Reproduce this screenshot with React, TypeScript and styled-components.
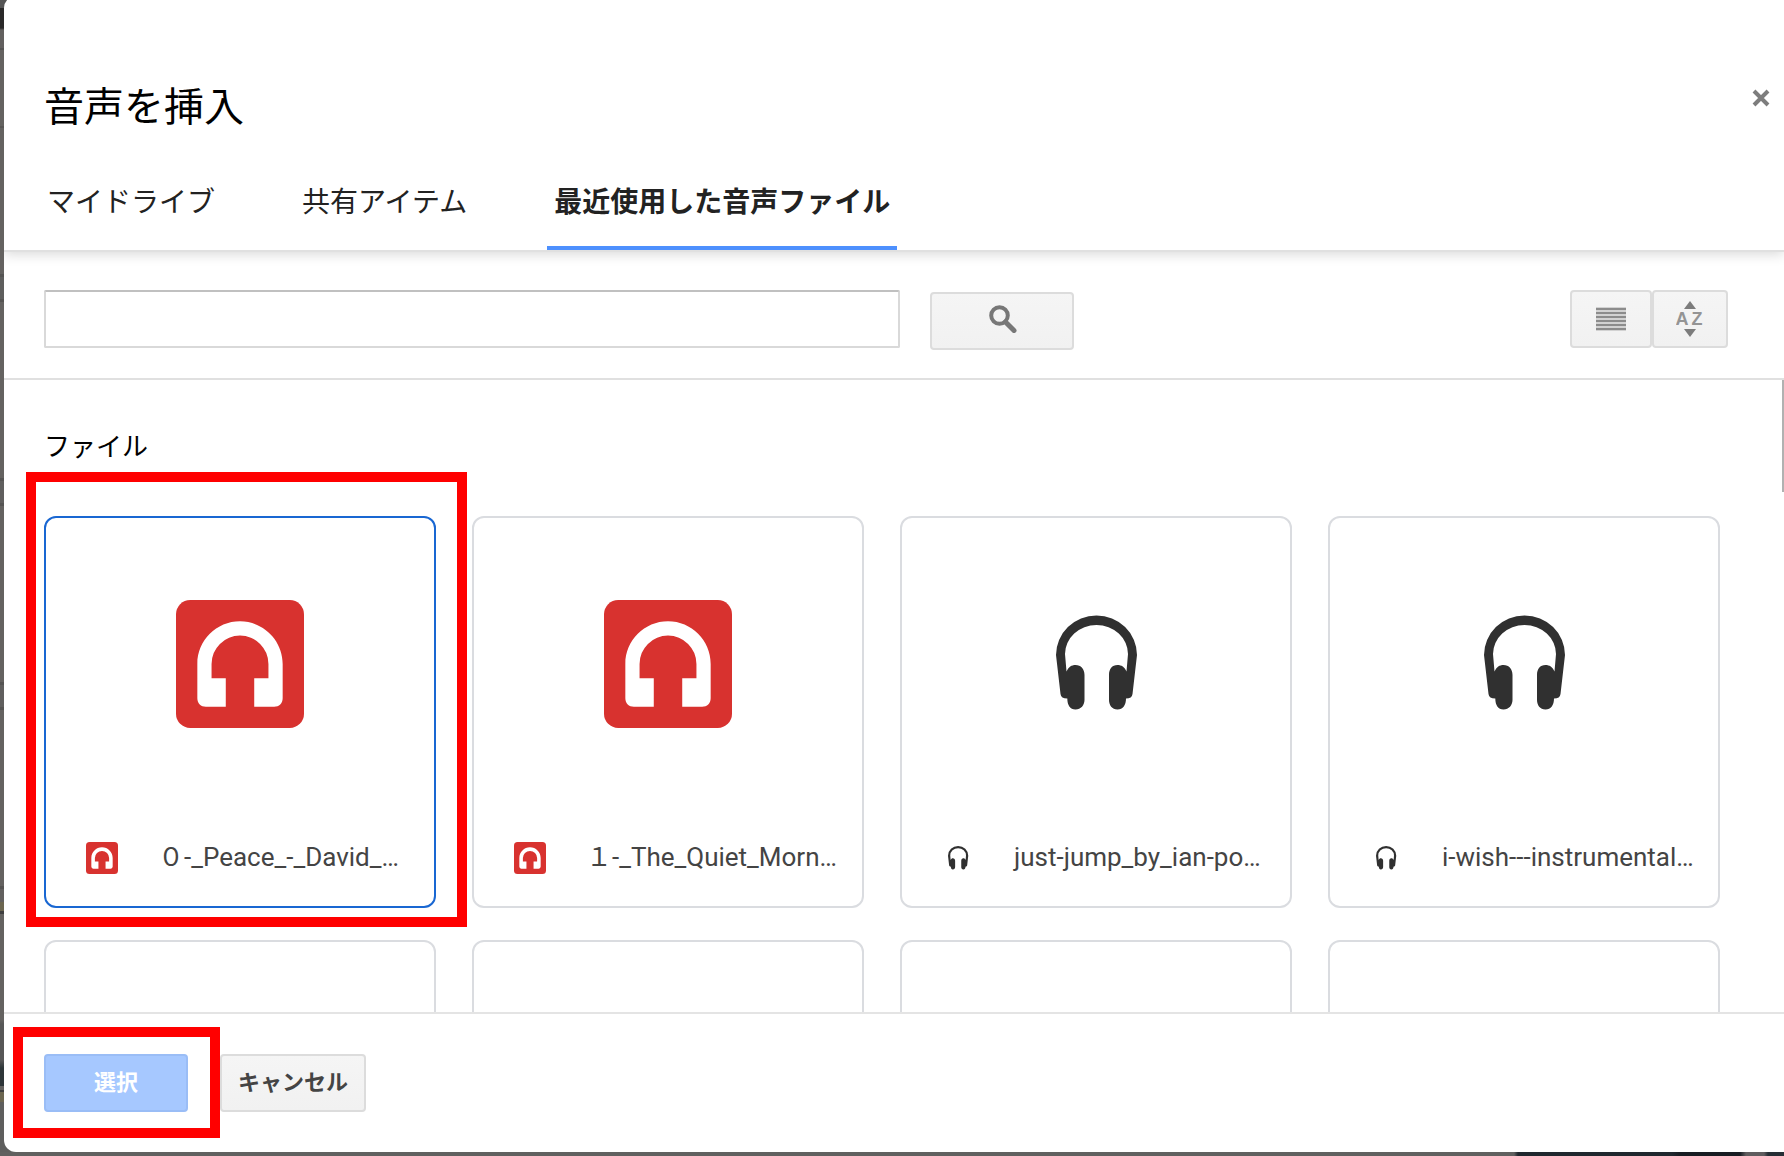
import React, { useState } from "react";
import styled, { createGlobalStyle, css } from "styled-components";

const GlobalStyle = createGlobalStyle`
  *, *::before, *::after { box-sizing: border-box; }
  html, body { margin: 0; height: 100%; overflow: hidden; }
  body {
    font-family: Roboto, "Noto Sans CJK JP", sans-serif;
    color: #000;
    background: #646260;
  }
  button, input { font-family: inherit; margin: 0; }
`;

/* The dimmed editor page that shows along the dialog's left and bottom edges. */
const Backdrop = styled.div`
  height: 100vh;
  display: flex;
  padding: 0 0 4px 4px;
  background:
    linear-gradient(90deg, transparent 0 1514px, #20272e 1518px 1672px, #171c22 1680px 1740px, #5f5c5e 1746px 1764px, #262e35 1768px) bottom / 100% 4px no-repeat,
    linear-gradient(#60605f, #60605f) bottom / 100% 4px no-repeat,
    linear-gradient(
      #555 0 8px, #2a2929 8px 28px, #62605f 30px 48px, #555453 48px 50px,
      #646260 50px 126px, #585655 126px 128px, #646260 128px 274px,
      #555453 274px 277px, #5e5e5d 277px 299px, #555453 299px 302px,
      #646260 302px 478px, #555453 478px 481px, #605f5e 481px 503px,
      #555453 503px 506px, #646260 506px 682px, #555453 682px 685px,
      #605f5e 685px 707px, #555453 707px 710px, #646260 710px 886px,
      #555453 886px 889px, #62605f 889px 902px, #6c6650 902px 911px,
      #3f3f3f 911px 914px, #646260 914px 1020px, #575757 1024px 1060px,
      #2e3639 1068px 1086px, #646260 1086px 1090px, #3f3f3f 1090px 1092px,
      #6c6650 1092px 1102px, #5e5e5d 1102px
    );
`;

const Dialog = styled.section`
  flex: 1;
  min-width: 0;
  display: flex;
  flex-direction: column;
  margin-top: -4px;
  background: #fff;
  border-radius: 12px 0 0 12px;
  overflow: hidden;
`;

const Header = styled.header`
  position: relative;
  z-index: 1;
  display: flex;
  flex-direction: column;
  padding-top: 82px;
  border-bottom: 2px solid #e0e0e0;
  box-shadow: 0 2px 12px rgba(0, 0, 0, 0.16);
`;

const TitleRow = styled.div`
  display: flex;
  justify-content: space-between;
  align-items: flex-start;
  padding: 0 8px 0 40px;
`;

const Title = styled.h1`
  margin: 0;
  font-size: 40px;
  line-height: 60px;
  font-weight: 400;
`;

const CloseButton = styled.button`
  width: 30px;
  height: 40px;
  display: grid;
  place-items: center;
  padding: 0;
  border: 0;
  background: none;
  color: #7d7d7d;
  cursor: pointer;
`;

const Tabs = styled.nav`
  display: flex;
  gap: 73px;
  padding: 13px 36px 0;
`;

const Tab = styled.button<{ $active: boolean }>`
  height: 99px;
  padding: 8px 7px 0;
  border: 0;
  border-bottom: 4px solid ${(p) => (p.$active ? "#4d90fe" : "transparent")};
  background: none;
  color: #222;
  font-size: 28px;
  line-height: 42px;
  font-weight: ${(p) => (p.$active ? 700 : 400)};
  white-space: nowrap;
  cursor: pointer;
`;

const Toolbar = styled.div`
  display: flex;
  justify-content: space-between;
  align-items: flex-start;
  padding: 38px 56px 28px 40px;
  border-bottom: 2px solid #e0e0e0;
`;

const SearchForm = styled.form`
  flex: 0 1 1030px;
  display: flex;
  gap: 30px;
`;

const SearchInput = styled.input`
  flex: 1;
  min-width: 0;
  height: 58px;
  padding: 0 16px;
  border: 2px solid #d9d9d9;
  border-top-color: #c0c0c0;
  border-radius: 2px;
  font-size: 26px;
  outline: none;
`;

const buttonBase = css`
  height: 58px;
  display: flex;
  align-items: center;
  justify-content: center;
  padding: 0;
  border: 2px solid #dcdcdc;
  border-radius: 4px;
  background: linear-gradient(#f5f5f5, #f1f1f1);
  color: #444;
  cursor: pointer;
`;

const SearchButton = styled.button`
  ${buttonBase}
  width: 144px;
  margin-top: 2px;
  padding: 0 0 4px 2px;
`;

const ViewTools = styled.div`
  display: flex;
`;

const ToolButton = styled.button<{ $width: number }>`
  ${buttonBase}
  width: ${(p) => p.$width}px;
`;

const Body = styled.main`
  position: relative;
  flex: 1;
  min-height: 0;
  overflow: hidden;
  padding: 47px 64px 0 40px;
`;

const ScrollThumb = styled.div`
  position: absolute;
  top: 0;
  right: 0;
  width: 2px;
  height: 112px;
  background: #b1b1b1;
`;

const SectionTitle = styled.h2`
  margin: 0 0 49px;
  font-size: 26px;
  line-height: 40px;
  font-weight: 400;
`;

const Grid = styled.ul`
  display: grid;
  grid-template-columns: repeat(4, minmax(0, 1fr));
  gap: 32px 36px;
  margin: 0;
  padding: 0;
  list-style: none;
`;

const GridItem = styled.li`
  position: relative;
`;

const Card = styled.button<{ $selected: boolean }>`
  width: 100%;
  aspect-ratio: 1;
  display: flex;
  flex-direction: column;
  padding: 0;
  border: 2px solid ${(p) => (p.$selected ? "#1967d2" : "#dadce0")};
  border-radius: 12px;
  background: #fff;
  color: #444;
  text-align: left;
  cursor: pointer;
`;

const Preview = styled.span`
  flex: 1;
  width: 100%;
  display: grid;
  place-items: center;
`;

const Caption = styled.span`
  width: 100%;
  height: 96px;
  display: flex;
  align-items: center;
  gap: 40px;
  padding: 0 8px 0 40px;
  svg { flex: none; }
`;

const FileName = styled.span`
  padding-bottom: 2px;
  font-size: 26px;
  line-height: 40px;
  white-space: nowrap;
`;

const Marker = styled.span<{ $inset: string }>`
  position: absolute;
  z-index: 2;
  inset: ${(p) => p.$inset};
  border: 10px solid #f00;
  pointer-events: none;
`;

const Footer = styled.footer`
  display: flex;
  gap: 32px;
  padding: 40px;
  border-top: 2px solid #e4e4e4;
`;

const ActionSlot = styled.div`
  position: relative;
`;

const ActionButton = styled.button<{ $primary?: boolean }>`
  ${buttonBase}
  width: ${(p) => (p.$primary ? 144 : 146)}px;
  font-size: 22px;
  line-height: 32px;
  font-weight: 700;
  ${(p) =>
    p.$primary &&
    css`
      border-color: #9abdf6;
      background: #a6c8ff;
      color: #fff;
    `}
`;

function CloseIcon() {
  return (
    <svg width="18" height="18" viewBox="0 0 18 18" fill="none" stroke="currentColor" strokeWidth="4" aria-hidden="true">
      <path d="M2 2l14 14M16 2L2 16" />
    </svg>
  );
}

function SearchIcon() {
  return (
    <svg width="28" height="28" viewBox="0 0 28 28" fill="none" stroke="#777" aria-hidden="true">
      <circle cx="10.5" cy="10.5" r="8.3" strokeWidth="4" />
      <path d="M16.5 17l8.500 8.500" strokeWidth="5" strokeLinecap="round" />
    </svg>
  );
}

function ListIcon() {
  return (
    <svg width="30" height="24" viewBox="0 0 30 24" aria-hidden="true">
      <rect width="30" height="24" fill="#d2d2d2" />
      {[1, 5, 9, 13, 17, 21].map((y) => (
        <rect key={y} y={y} width="30" height="2" fill="#8c8c8c" />
      ))}
    </svg>
  );
}

function SortIcon() {
  return (
    <svg width="28" height="36" viewBox="0 0 28 36" aria-hidden="true">
      <path d="M14 0l6 8H8zM14 36l6-8H8z" fill="#7c7c7c" />
      <g fontFamily="Liberation Sans, sans-serif" fontSize="18" fontWeight="700" fill="#949494" textAnchor="middle">
        <text x="6" y="24">A</text>
        <text x="21" y="24">Z</text>
      </g>
    </svg>
  );
}

function AudioBadge({ size }: { size: number }) {
  return (
    <svg width={size} height={size} viewBox="0 0 18 18" aria-hidden="true">
      <rect width="18" height="18" rx="2" fill="#d8322f" />
      <path
        d="M9 3C5.700 3 3 5.700 3 9v4.800C3 14.500 3.500 15 4.200 15H7v-4H5V9a4 4 0 0 1 8 0v2h-2v4h2.800c.7 0 1.200-.5 1.200-1.200V9c0-3.300-2.700-6-6-6z"
        fill="#fff"
      />
    </svg>
  );
}

function Headphones({ size }: { size: number }) {
  return (
    <svg width={size} height={size} viewBox="0 0 128 128" fill="#303030" aria-hidden="true">
      <path
        d="M24 55A40.500 39.500 0 0 1 105 55L100.500 94Q100 98.500 94 98.500C94 105 91 109.500 85.500 109.500C80 109.500 77 105 77 100V75
           C77 69 80 65 85.500 65C89.500 65 92.500 67 94.500 71.500L96 54A31.500 29 0 0 0 33 54L34.500 71.500
           C36.500 67 39.500 65 43.500 65C49 65 52.500 69 52.500 75V100C52.500 105 49 109.500 43.500 109.500C38 109.500 35.300 105 35.300 98.500Q29 98.500 28.500 94Z"
      />
    </svg>
  );
}

type FileKind = "badge" | "plain";

interface AudioFile {
  name: string;
  kind: FileKind;
}

const files: AudioFile[] = [
  { name: "０-_Peace_-_David_…", kind: "badge" },
  { name: "１-_The_Quiet_Morn…", kind: "badge" },
  { name: "just-jump_by_ian-po…", kind: "plain" },
  { name: "i-wish---instrumental…", kind: "plain" },
];

const pendingSlots = [5, 6, 7, 8];

const tabs = ["マイドライブ", "共有アイテム", "最近使用した音声ファイル"];

function FileIcon({ kind, size }: { kind: FileKind; size: number }) {
  return kind === "badge" ? <AudioBadge size={size} /> : <Headphones size={size} />;
}

export default function App() {
  const [activeTab, setActiveTab] = useState(2);
  const [selected, setSelected] = useState(0);

  return (
    <>
      <GlobalStyle />
      <Backdrop>
        <Dialog role="dialog" aria-labelledby="dialog-title">
          <Header>
            <TitleRow>
              <Title id="dialog-title">音声を挿入</Title>
              <CloseButton type="button" aria-label="閉じる">
                <CloseIcon />
              </CloseButton>
            </TitleRow>
            <Tabs>
              {tabs.map((label, i) => (
                <Tab key={label} type="button" $active={i === activeTab} onClick={() => setActiveTab(i)}>
                  {label}
                </Tab>
              ))}
            </Tabs>
          </Header>

          <Toolbar>
            <SearchForm role="search" onSubmit={(e) => e.preventDefault()}>
              <SearchInput type="text" aria-label="検索" />
              <SearchButton type="submit" aria-label="検索">
                <SearchIcon />
              </SearchButton>
            </SearchForm>
            <ViewTools>
              <ToolButton type="button" $width={82} aria-label="リスト表示">
                <ListIcon />
              </ToolButton>
              <ToolButton type="button" $width={76} aria-label="並べ替え">
                <SortIcon />
              </ToolButton>
            </ViewTools>
          </Toolbar>

          <Body>
            <SectionTitle>ファイル</SectionTitle>
            <Grid>
              {files.map((file, i) => (
                <GridItem key={file.name}>
                  <Card type="button" $selected={i === selected} aria-pressed={i === selected} onClick={() => setSelected(i)}>
                    <Preview>
                      <FileIcon kind={file.kind} size={128} />
                    </Preview>
                    <Caption>
                      <FileIcon kind={file.kind} size={32} />
                      <FileName>{file.name}</FileName>
                    </Caption>
                  </Card>
                  {i === 0 && <Marker $inset="-44px -31px -19px -18px" />}
                </GridItem>
              ))}
              {pendingSlots.map((n) => (
                <GridItem key={n}>
                  <Card type="button" $selected={false} aria-label={`ファイル ${n}`} />
                </GridItem>
              ))}
            </Grid>
            <ScrollThumb />
          </Body>

          <Footer>
            <ActionSlot>
              <ActionButton type="button" $primary>
                選択
              </ActionButton>
              <Marker $inset="-27px -32px -26px -31px" />
            </ActionSlot>
            <ActionButton type="button">キャンセル</ActionButton>
          </Footer>
        </Dialog>
      </Backdrop>
    </>
  );
}
